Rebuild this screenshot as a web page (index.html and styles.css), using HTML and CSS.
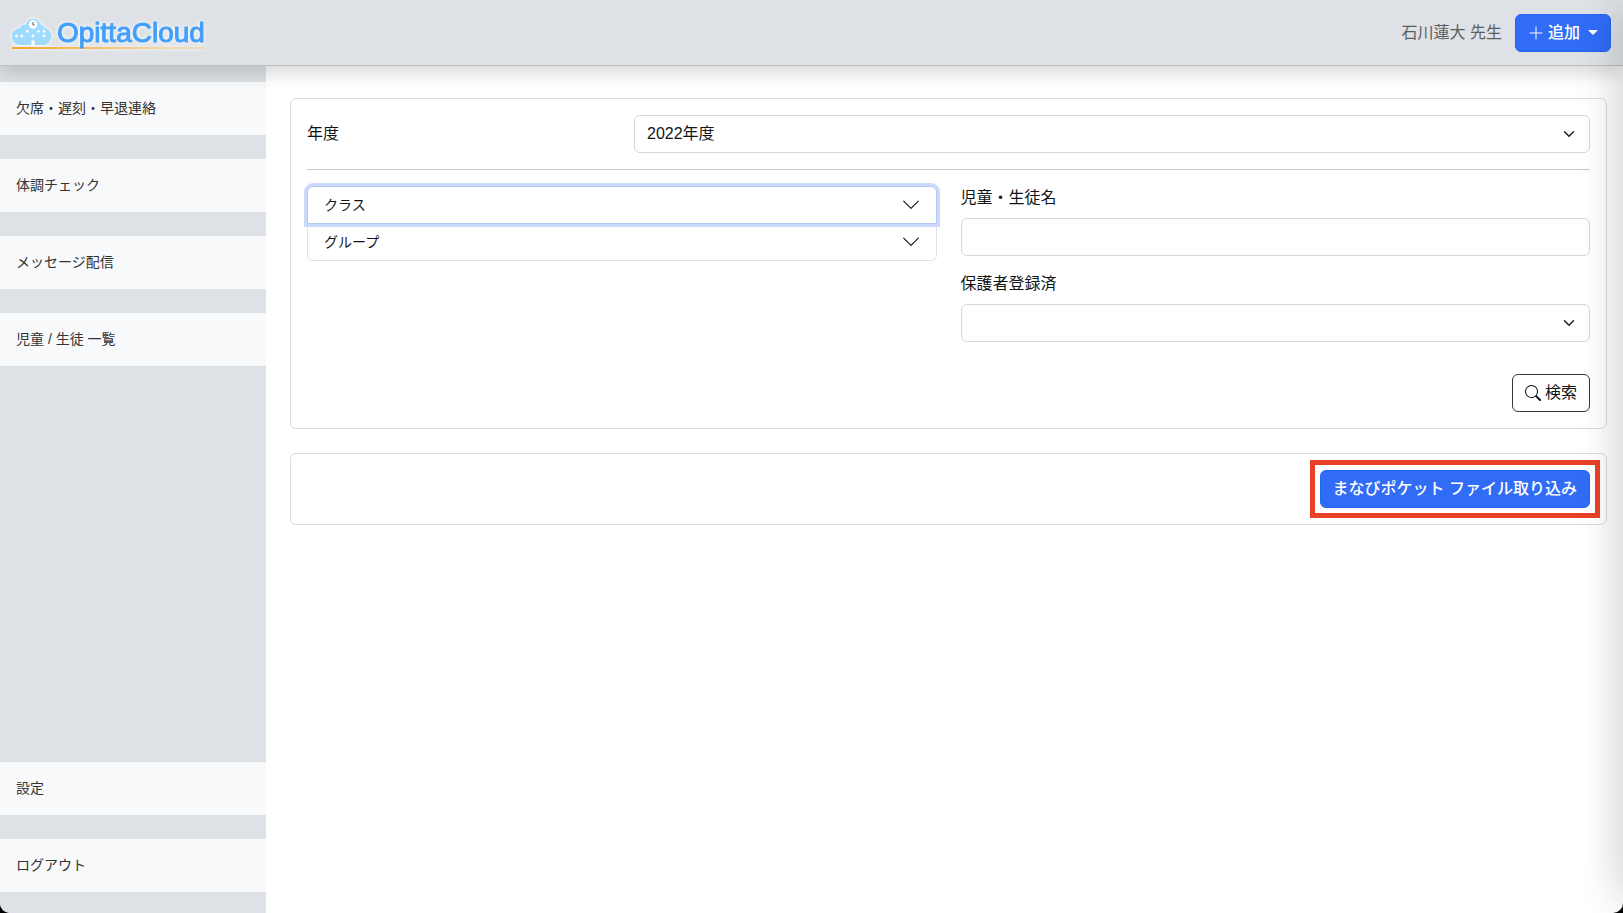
FILE: index.html
```html
<!DOCTYPE html>
<html lang="ja">
<head>
<meta charset="utf-8">
<meta name="viewport" content="width=device-width, initial-scale=1">
<title>OpittaCloud</title>
<link rel="stylesheet" href="styles.css">
</head>
<body>
<div class="window">
  <header class="topbar">
    <a class="brand" href="#">
      <svg class="brand-cloud" viewBox="0 0 40 28" width="40" height="28" aria-hidden="true">
        <path fill="#9fdbff" d="M9 27a8.500 8.500 0 0 1-1.500-17A8 8 0 0 1 14 6.500a7.500 7.500 0 0 1 14.500 0A7 7 0 0 1 33 10a8.700 8.700 0 0 1-2 17z"/>
        <circle cx="21" cy="6.500" r="4.200" fill="#fff"/>
        <path d="M21 4v3h1.500" fill="none" stroke="#555" stroke-width="1"/>
        <g fill="#fff"><circle cx="4.500" cy="18" r="1.400"/><circle cx="9.700" cy="18" r="1.400"/><circle cx="15.500" cy="13.300" r="1.400"/><circle cx="21" cy="18" r="1.400"/><circle cx="26.500" cy="13.300" r="1.400"/><circle cx="32" cy="13.300" r="1.400"/><circle cx="32" cy="18" r="1.400"/><path d="M19.500 27v-4.500h3V27z"/></g>
      </svg>
      <span class="brand-name">OpittaCloud</span>
    </a>
    <div class="account">
      <span class="account-name">石川蓮大 先生</span>
      <button class="btn btn-primary btn-add" type="button">
        <svg viewBox="0 0 16 16" width="16" height="16" aria-hidden="true"><path d="M8 2v12M2 8h12" stroke="currentColor" stroke-linecap="round"/></svg>
        <span>追加</span>
        <span class="caret"></span>
      </button>
    </div>
  </header>
  <div class="body">
    <nav class="sidebar">
      <a class="nav-item" href="#">欠席・遅刻・早退連絡</a>
      <a class="nav-item" href="#">体調チェック</a>
      <a class="nav-item" href="#">メッセージ配信</a>
      <a class="nav-item" href="#">児童 / 生徒 一覧</a>
      <a class="nav-item nav-bottom" href="#">設定</a>
      <a class="nav-item" href="#">ログアウト</a>
    </nav>
    <main class="content">
      <form class="card">
        <div class="year-row">
          <label for="year">年度</label>
          <select class="control select" id="year"><option>2022年度</option></select>
        </div>
        <hr class="divider">
        <div class="filters">
          <div class="accordion">
            <button class="accordion-button focused" type="button"><span>クラス</span>
              <svg viewBox="0 0 16 16" width="18" height="18" aria-hidden="true"><path d="M1.500 4.500 8 11l6.500-6.500" fill="none" stroke="currentColor" stroke-linecap="round" stroke-linejoin="round"/></svg></button>
            <button class="accordion-button" type="button"><span>グループ</span>
              <svg viewBox="0 0 16 16" width="18" height="18" aria-hidden="true"><path d="M1.500 4.500 8 11l6.500-6.500" fill="none" stroke="currentColor" stroke-linecap="round" stroke-linejoin="round"/></svg></button>
          </div>
          <div class="fields">
            <div class="field"><label for="name">児童・生徒名</label><input class="control" id="name" type="text"></div>
            <div class="field"><label for="registered">保護者登録済</label><select class="control select" id="registered"><option></option></select></div>
          </div>
        </div>
        <div class="actions">
          <button class="btn btn-outline" type="button">
            <svg viewBox="0 0 16 16" width="16" height="16" fill="currentColor" aria-hidden="true"><path d="M11.742 10.344a6.500 6.500 0 1 0-1.397 1.398h-.001q.044.060.098.115l3.850 3.850a1 1 0 0 0 1.415-1.414l-3.850-3.850a1 1 0 0 0-.115-.1zM12 6.500a5.500 5.500 0 1 1-11 0 5.500 5.500 0 0 1 11 0"/></svg>
            <span>検索</span>
          </button>
        </div>
      </form>
      <section class="card import">
        <div class="highlight">
          <button class="btn btn-primary" type="button">まなびポケット ファイル取り込み</button>
        </div>
      </section>
    </main>
  </div>
</div>
</body>
</html>
```
FILE: styles.css
```css
* { box-sizing: border-box; }

body {
  margin: 0;
  background: #000;
  color: #111417;
  font-family: "Liberation Sans", "Noto Sans CJK JP", sans-serif;
  font-size: 16px;
  line-height: 24px;
}

button, input, select { font: inherit; color: inherit; }

.window {
  position: relative;
  display: flex;
  flex-direction: column;
  min-height: 100vh;
  background: #fff;
  border-radius: 0 0 10px 10px;
  overflow: hidden;
}

.window::after {
  content: "";
  position: absolute;
  inset: 8px -20px 16px 100%;
  box-shadow: 0 0 40px rgba(0, 0, 0, .3);
  pointer-events: none;
  z-index: 3;
}

.topbar {
  position: relative;
  z-index: 2;
  display: flex;
  align-items: center;
  justify-content: space-between;
  height: 66px;
  padding: 0 12px;
  background: #dee2e6;
  border-bottom: 1px solid #bcc0c5;
  box-shadow: 0 8px 16px rgba(0, 0, 0, .15);
}

.brand {
  display: flex;
  align-items: flex-end;
  gap: 5px;
  padding: 2px 0 1px;
  border-bottom: 2px solid;
  border-image: linear-gradient(90deg, #f5a623, #f5d9a8 80%, #ead9c0) 1;
  color: #429ffb;
  text-decoration: none;
  filter: drop-shadow(0 0 2px #fff);
}

.brand-cloud { display: block; }

.brand-name {
  font-size: 28px;
  line-height: 26px;
  -webkit-text-stroke: 1px currentColor;
}

.account { display: flex; align-items: center; gap: 13px; }
.account-name { color: #5c5f62; }

.btn {
  display: inline-flex;
  align-items: center;
  gap: 4px;
  height: 38px;
  padding: 0 12px;
  border: 1px solid transparent;
  border-radius: 6px;
  white-space: nowrap;
}

.btn-primary { background: #306cf6; border-color: #2465f5; color: #fff; font-weight: 500; }
.btn-outline { background: #fff; border-color: #33363a; }

.caret {
  margin-left: 4px;
  border: 5px solid transparent;
  border-top-color: currentColor;
  border-bottom: 0;
}

.body { display: flex; flex: 1; }

.sidebar {
  display: flex;
  flex-direction: column;
  flex: 0 0 266px;
  gap: 24px;
  padding: 16px 0 21px;
  background: #dee2e6;
}

.nav-item {
  padding: 16px;
  background: #f8f9fa;
  color: #333;
  font-size: 14px;
  line-height: 21px;
  text-decoration: none;
}

.nav-bottom { margin-top: auto; }

.content {
  flex: 1;
  display: flex;
  flex-direction: column;
  gap: 24px;
  min-width: 0;
  padding: 32px 16px 32px 24px;
}

.card {
  padding: 16px;
  border: 1px solid #d8dadc;
  border-radius: 6px;
}

.year-row { display: grid; grid-template-columns: 327px 1fr; align-items: center; }

.control {
  display: block;
  width: 100%;
  height: 38px;
  padding: 0 12px;
  border: 1px solid #d3d7dd;
  border-radius: 6px;
  background: #fff;
}

.select {
  appearance: none;
  background: #fff url("data:image/svg+xml,%3Csvg xmlns='http://www.w3.org/2000/svg' viewBox='0 0 16 16'%3E%3Cpath fill='none' stroke='%23212529' stroke-linecap='round' stroke-linejoin='round' stroke-width='2' d='m2 5 6 6 6-6'/%3E%3C/svg%3E") no-repeat right 14px center / 12px 12px;
}

.divider { margin: 16px 0; border: 0; border-top: 1px solid #c8cacc; }

.filters { display: grid; grid-template-columns: 1fr 1fr; column-gap: 24px; align-items: start; }

.accordion { display: flex; flex-direction: column; }

.accordion-button {
  display: flex;
  align-items: center;
  justify-content: space-between;
  height: 37px;
  padding: 0 16px;
  border: 1px solid #dee2e6;
  border-top: 0;
  border-radius: 0 0 6px 6px;
  background: #fff;
  font-size: 14px;
}

.accordion-button.focused {
  position: relative;
  height: 38px;
  border: 1px solid #b4c8f2;
  border-radius: 6px 6px 0 0;
  box-shadow: 0 0 0 3px #cbdafc;
}

.fields { display: grid; gap: 16px; }
.field { display: grid; gap: 8px; }

.actions { display: flex; justify-content: flex-end; margin-top: 32px; }

.import { display: flex; justify-content: flex-end; }
.highlight { display: flex; outline: 5px solid #ea4025; outline-offset: 5px; }
```
